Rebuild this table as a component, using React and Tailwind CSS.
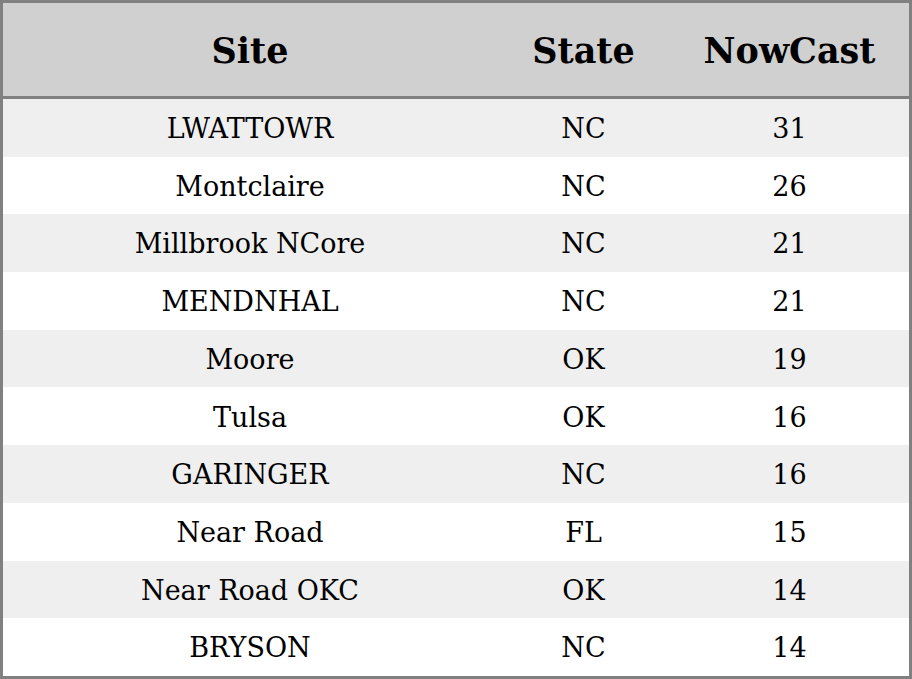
import React from "react";

const rows = [
  ["LWATTOWR", "NC", "31"],
  ["Montclaire", "NC", "26"],
  ["Millbrook NCore", "NC", "21"],
  ["MENDNHAL", "NC", "21"],
  ["Moore", "OK", "19"],
  ["Tulsa", "OK", "16"],
  ["GARINGER", "NC", "16"],
  ["Near Road", "FL", "15"],
  ["Near Road OKC", "OK", "14"],
  ["BRYSON", "NC", "14"],
];

const cols = "grid grid-cols-[494px_173px_1fr] items-center text-center";

const App = () => {
  return (
    <div
      className="w-[912px] h-[679px] border-[3px] border-[#808080] bg-white text-black"
      style={{ fontFamily: '"DejaVu Serif", serif' }}
    >
      <div className={`${cols} h-[96px] pt-[4px] bg-[#d0d0d0] border-b-[3px] border-[#808080] text-[35px] font-bold`}>
        <div>Site</div>
        <div>State</div>
        <div>NowCast</div>
      </div>
      {rows.map((r, i) => (
        <div
          key={i}
          className={`${cols} h-[57.7px] pt-[3px] text-[27px] ${i % 2 === 0 ? "bg-[#efefef]" : "bg-white"}`}
        >
          <div>{r[0]}</div>
          <div>{r[1]}</div>
          <div>{r[2]}</div>
        </div>
      ))}
    </div>
  );
};

export default App;
